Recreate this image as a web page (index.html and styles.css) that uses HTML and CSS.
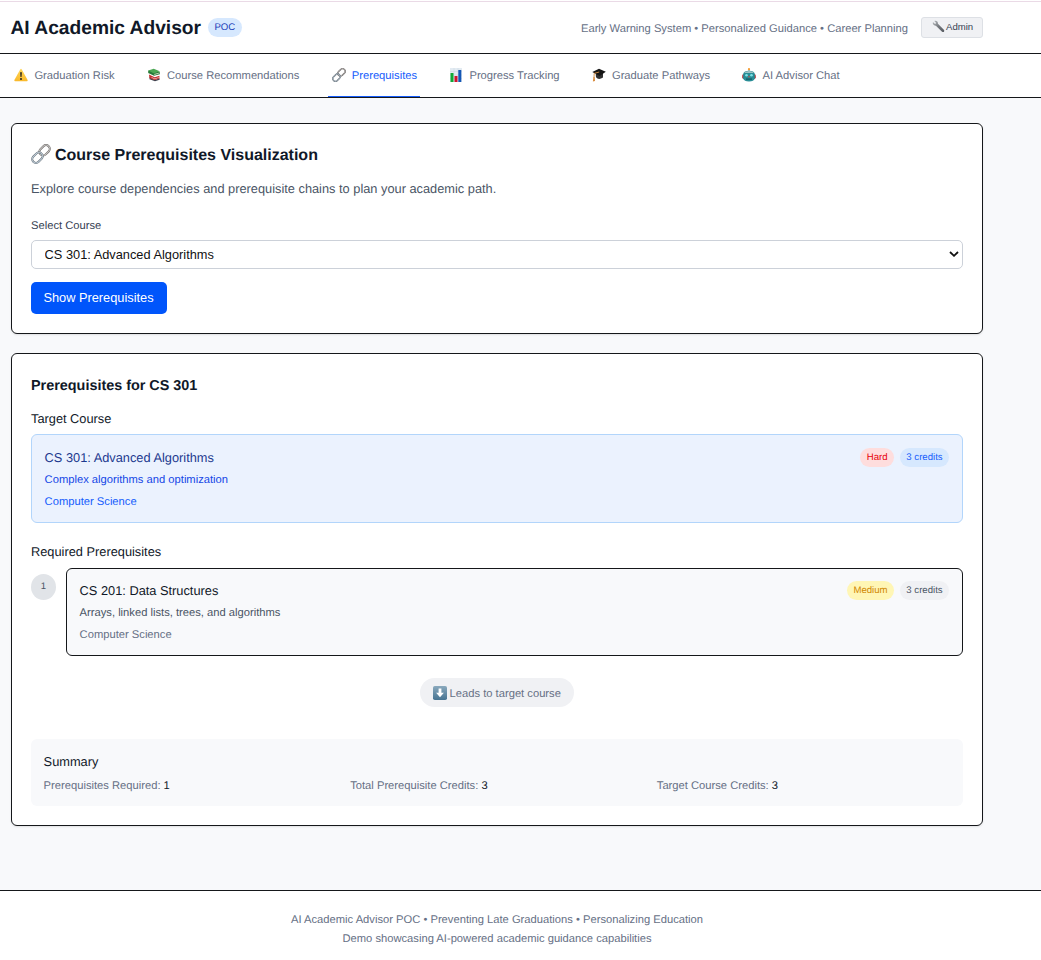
FILE: index.html
```html
<!DOCTYPE html>
<html lang="en">
<head>
<meta charset="utf-8">
<title>AI Academic Advisor</title>
<link rel="stylesheet" href="styles.css">
</head>
<body>
<svg class="defs" width="0" height="0" aria-hidden="true">
  <defs>
    <linearGradient id="steel" x1="0" y1="0" x2="1" y2="1"><stop offset="0" stop-color="#b9bdc1"/><stop offset=".5" stop-color="#75797e"/><stop offset="1" stop-color="#55595f"/></linearGradient>
    <linearGradient id="key" x1="0" y1="0" x2="0" y2="1"><stop offset="0" stop-color="#8aa9bd"/><stop offset="1" stop-color="#477492"/></linearGradient>
    <linearGradient id="sign" x1="0" y1="0" x2="0" y2="1"><stop offset="0" stop-color="#ffd75a"/><stop offset="1" stop-color="#f9b92b"/></linearGradient>
    <symbol id="link" viewBox="0 0 20 20">
      <g fill="none">
        <rect x="7.75" y="2.6" width="11.6" height="7.4" rx="3.7" transform="rotate(-45 13.55 6.3)" stroke="#64605f" stroke-width="2"/>
        <rect x="7.75" y="2.6" width="11.6" height="7.4" rx="3.7" transform="rotate(-45 13.55 6.3)" stroke="#c9c7c5" stroke-width="1"/>
        <rect x=".65" y="10" width="11.6" height="7.4" rx="3.7" transform="rotate(-45 6.45 13.7)" stroke="#5f6972" stroke-width="2"/>
        <rect x=".65" y="10" width="11.6" height="7.4" rx="3.7" transform="rotate(-45 6.45 13.7)" stroke="#c2d0da" stroke-width="1"/>
      </g>
    </symbol>
  </defs>
</svg>
<header class="header">
  <div class="container header-row">
    <div class="brand"><h1>AI Academic Advisor</h1><span class="badge poc">POC</span></div>
    <div class="header-right">
      <span class="tagline">Early Warning System • Personalized Guidance • Career Planning</span>
      <button class="admin"><svg class="wrench" viewBox="0 0 14 14"><path d="M1 2.2 3.3 4.3 4.5 3.2 2.5 1C4.5.2 6.6 1.6 6.4 4L13 10.8Q13.6 12 12.7 12.8 11.8 13.4 10.8 12.6L4.2 6.1C2.2 6.5.2 4.5 1 2.2Z" fill="url(#steel)"/></svg>Admin</button>
    </div>
  </div>
</header>
<nav class="nav">
  <div class="container tabs">
    <a class="tab"><svg class="emoji" viewBox="0 0 14 14"><path d="M6.2 1.5Q7 .2 7.8 1.5L13.6 12Q14 13.2 12.8 13.2H1.2Q0 13.2.4 12Z" fill="url(#sign)"/><path d="M6.1 4.3h1.8L7.5 9h-1Z" fill="#29251d"/><circle cx="7" cy="11" r="1" fill="#29251d"/></svg>Graduation Risk</a>
    <a class="tab"><svg class="emoji" viewBox="0 0 14 14"><path d="M2.5 9 8 12 12.6 10.2V11.8L8 13.3 2.5 11.3Z" fill="#3a4350"/><path d="M2 6.5 7.7 9.3 12.4 7.7V10.5L7.7 12.3 2.4 10Z" fill="#c43131"/><path d="M4.5 8.9 7.8 10.5 12.3 9V9.6L7.8 11.2 4.5 9.7Z" fill="#ecc9c6"/><path d="M1.2 2.6V5L7 7.8 12.8 6.2V3.8Z" fill="#267a38"/><path d="M1.2 2.6 6.7.8 12.8 3.2 7 5.4Z" fill="#4ba653"/><path d="M7.3 6 12.5 4.4V5.2L7.3 6.9Z" fill="#cfd8bf"/></svg>Course Recommendations</a>
    <a class="tab active"><svg class="emoji"><use href="#link"/></svg>Prerequisites</a>
    <a class="tab"><svg class="emoji" viewBox="0 0 14 14"><path d="M1 0h12v14H1Z" fill="#e3ebf2"/><path d="M1 3.5h12M1 7h12M1 10.5h12M5 0v14M9 0v14" stroke="#c7d4e0" stroke-width=".5"/><path d="M1.5 5h3v9h-3Z" fill="#10a936"/><path d="M5.5 8h3v6h-3Z" fill="#d1132f"/><path d="M9.3 2h3v12h-3Z" fill="#1557b5"/></svg>Progress Tracking</a>
    <a class="tab"><svg class="emoji" viewBox="0 0 14 14"><path d="M3.7 5.5 4 9.3Q6.5 12.4 11 9.6V5Z" fill="#303030"/><path d="M.3 4 7 .7 13.8 3.7 7.7 8Z" fill="#151515"/><path d="M7.2 4 2.2 5.4 2 9.5" fill="none" stroke="#d28c40" stroke-width=".9"/><path d="M1.4 9h1.3L3 13 .9 13.4Z" fill="#d88b3d"/></svg>Graduate Pathways</a>
    <a class="tab"><svg class="emoji" viewBox="0 0 14 14"><path d="M7 2v3" stroke="#739094"/><circle cx="7" cy="1.2" r="1.1" fill="#f39b32"/><rect x=".2" y="6" width="13.6" height="5" rx="1.8" fill="#b52f33"/><path d="M1.2 6Q2 2.8 7 2.8T12.8 6V10.5Q12 13.4 7 13.4T1.2 10.5Z" fill="#288d96"/><path d="M2 5Q3.5 3 7 3T12 5Z" fill="#9dbfc2"/><circle cx="4.5" cy="7.2" r="1.3" fill="#7be0e6"/><circle cx="9.5" cy="7.2" r="1.3" fill="#7be0e6"/><path d="M7 7.6 8 9.2H6Z" fill="#d84743"/><path d="M4 10.5h6v1.2H4Z" fill="#0e5663"/></svg>AI Advisor Chat</a>
  </div>
</nav>
<main class="container main">
  <section class="card selector">
    <h2><svg class="title-icon"><use href="#link"/></svg><span>Course Prerequisites Visualization</span></h2>
    <p class="intro">Explore course dependencies and prerequisite chains to plan your academic path.</p>
    <label class="label" for="course">Select Course</label>
    <div class="select-wrap">
      <select id="course"><option>CS 301: Advanced Algorithms</option></select>
      <svg class="chevron" viewBox="0 0 10 6"><path d="M1 1 5 4.8 9 1" fill="none" stroke="#111" stroke-width="1.8"/></svg>
    </div>
    <button class="primary">Show Prerequisites</button>
  </section>
  <section class="card results">
    <h3>Prerequisites for CS 301</h3>
    <h4 class="target-label">Target Course</h4>
    <article class="course target">
      <div><h5>CS 301: Advanced Algorithms</h5><p class="desc">Complex algorithms and optimization</p><p class="dept">Computer Science</p></div>
      <div class="badges"><span class="badge hard">Hard</span><span class="badge credits">3 credits</span></div>
    </article>
    <h4 class="required-label">Required Prerequisites</h4>
    <div class="step">
      <span class="number">1</span>
      <article class="course required">
        <div><h5>CS 201: Data Structures</h5><p class="desc">Arrays, linked lists, trees, and algorithms</p><p class="dept">Computer Science</p></div>
        <div class="badges"><span class="badge medium">Medium</span><span class="badge credits">3 credits</span></div>
      </article>
    </div>
    <div class="leads"><span class="pill"><svg class="down" viewBox="0 0 14 14"><rect width="14" height="14" rx="1.8" fill="url(#key)"/><path d="M5.6 2.5h2.8v4.3h2.5L7 11.2 3.1 6.8h2.5Z" fill="#fff"/></svg><span>Leads to target course</span></span></div>
    <div class="summary">
      <h4>Summary</h4>
      <div class="stats"><p>Prerequisites Required: <b>1</b></p><p>Total Prerequisite Credits: <b>3</b></p><p>Target Course Credits: <b>3</b></p></div>
    </div>
  </section>
</main>
<footer class="footer"><div class="container"><p>AI Academic Advisor POC • Preventing Late Graduations • Personalizing Education</p><p>Demo showcasing AI-powered academic guidance capabilities</p></div></footer>
</body>
</html>
```
FILE: styles.css
```css
* { box-sizing: border-box; }
body { margin: 0; min-height: 960px; background: #f8f9fb; color: #101828; font: 11.2px/16px "Liberation Sans", Arial, sans-serif; text-rendering: geometricPrecision; }
h1, h2, h3, h4, h5, p { margin: 0; }
svg { display: block; flex-shrink: 0; }
.defs { position: absolute; }
.container { width: 994px; padding: 0 11px; }

.header { height: 54px; padding-top: 1px; background: #fff; border-bottom: 1px solid #15171a; }
.header::before { content: ""; display: block; height: 1px; background: #eadae6; }
.header-row { display: flex; justify-content: space-between; height: 51px; }
.brand { display: flex; align-items: center; gap: 7px; margin-left: -.5px; }
h1 { padding-top: 2px; font-size: 19.2px; line-height: 24px; }
.badge { display: block; height: 19px; padding: 1px 6.4px 0; border-radius: 10px; font-size: 9.6px; line-height: 18px; }
.poc { color: #193cb8; background: #d6e8fe; }
.header-right { display: flex; align-items: center; gap: 13px; color: #667085; }
.tagline { padding-top: 3px; }
.admin { display: flex; align-items: center; width: 62px; height: 21px; padding: 0 0 1px 10px; border: 1px solid #dde0e5; border-radius: 3px; background: #f0f1f4; color: #364153; font: 9.6px/18px "Liberation Sans", Arial, sans-serif; }
.wrench { width: 13px; height: 13px; margin: -2px 1px 0 0; }

.nav { height: 44px; background: #fff; border-bottom: 1px solid #15171a; }
.tabs { display: flex; gap: 25.7px; }
.tab { display: flex; align-items: center; gap: 6.2px; height: 43px; padding: 2px 3.3px 0 3.2px; border-bottom: 1.5px solid transparent; color: #667085; white-space: nowrap; }
.tab.active { color: #155dfc; border-bottom-color: #155dfc; }
.emoji { width: 14px; height: 14px; margin-top: -2px; }

.main { padding-top: 25px; }
.card { background: #fff; border: 1px solid #15171a; border-radius: 6px; box-shadow: 0 1px 2px rgba(0,0,0,.1); padding: 20px 19px 19px; }
.selector { height: 211px; }
h2 { display: flex; align-items: center; gap: 4px; height: 21px; font-size: 16px; line-height: 21px; }
h2 span { padding-top: 1px; }
.title-icon { width: 20px; height: 20px; margin-top: -1px; }
.intro { margin-top: 14px; font-size: 12.8px; line-height: 20px; color: #4a5565; }
.label { display: block; margin-top: 19px; color: #364153; }
.select-wrap { position: relative; margin-top: 6px; }
select { display: block; appearance: none; width: 100%; height: 29px; padding: 0 12.6px; border: 1px solid #ccd1d9; border-radius: 5px; background: #fff; color: #111; font: 12.8px/20px "Liberation Sans", Arial, sans-serif; }
.chevron { position: absolute; right: 4px; top: 11px; width: 10px; height: 6px; }
.primary { display: block; width: 136px; height: 32px; margin-top: 13px; padding: 0 1px 0 0; border: 0; border-radius: 5px; background: #0055fb; color: #fff; font: 12.8px/20px "Liberation Sans", Arial, sans-serif; }

.results { margin-top: 19px; height: 473px; }
h3 { height: 22px; padding-top: 1px; font-size: 14.4px; line-height: 22px; }
h4, h5 { font-size: 12.8px; line-height: 20px; font-weight: 400; }
.target-label { margin-top: 13px; }
.course { display: flex; justify-content: space-between; border: 1px solid; border-radius: 6px; padding: 13px 13px 12px 12.6px; }
.desc { margin-top: 4px; }
.dept { margin-top: 6px; }
.badges { display: flex; gap: 6px; }
.target { margin-top: 5px; height: 89px; color: #1447e6; background: #ebf2fe; border-color: #b2d5fb; }
.target h5 { color: #1c398e; }
.target .dept { color: #155dfc; }
.target .credits { background: #d6e8fe; color: #155dfc; }
.hard { color: #e7000b; background: #fedddd; }
.required-label { margin-top: 19px; }
.step { display: flex; gap: 10px; margin-top: 6px; }
.number { width: 25px; height: 26px; margin-top: 6px; padding-top: 1px; border-radius: 50%; background: #e1e4e8; color: #4a5565; font-size: 9.6px; line-height: 24px; text-align: center; }
.required { flex: 1; height: 88px; padding-top: 12px; background: #f8f9fb; border-color: #15171a; color: #4a5565; }
.required h5 { color: #101828; }
.required .dept { color: #667085; }
.medium { color: #d08700; background: #fff6b5; }
.required .credits { background: #f0f1f4; color: #4a5565; }
.leads { display: flex; justify-content: center; margin-top: 22px; }
.pill { display: flex; align-items: center; justify-content: center; gap: 2.5px; width: 154px; height: 29px; border-radius: 15px; background: #f0f1f4; color: #667085; }
.pill span { padding-top: 2px; }
.down { width: 14px; height: 14px; }
.summary { height: 67px; margin-top: 32px; padding: 13px 12.6px 0; border-radius: 6px; background: #f8f9fb; }
.stats { display: grid; grid-template-columns: repeat(3, 1fr); gap: 13px; margin-top: 6px; color: #667085; }
.stats b { font-weight: 400; color: #101828; }

.footer { height: 70px; margin-top: 64px; padding-top: 20px; border-top: 1px solid #15171a; background: #fff; color: #667085; line-height: 19px; text-align: center; }
```
